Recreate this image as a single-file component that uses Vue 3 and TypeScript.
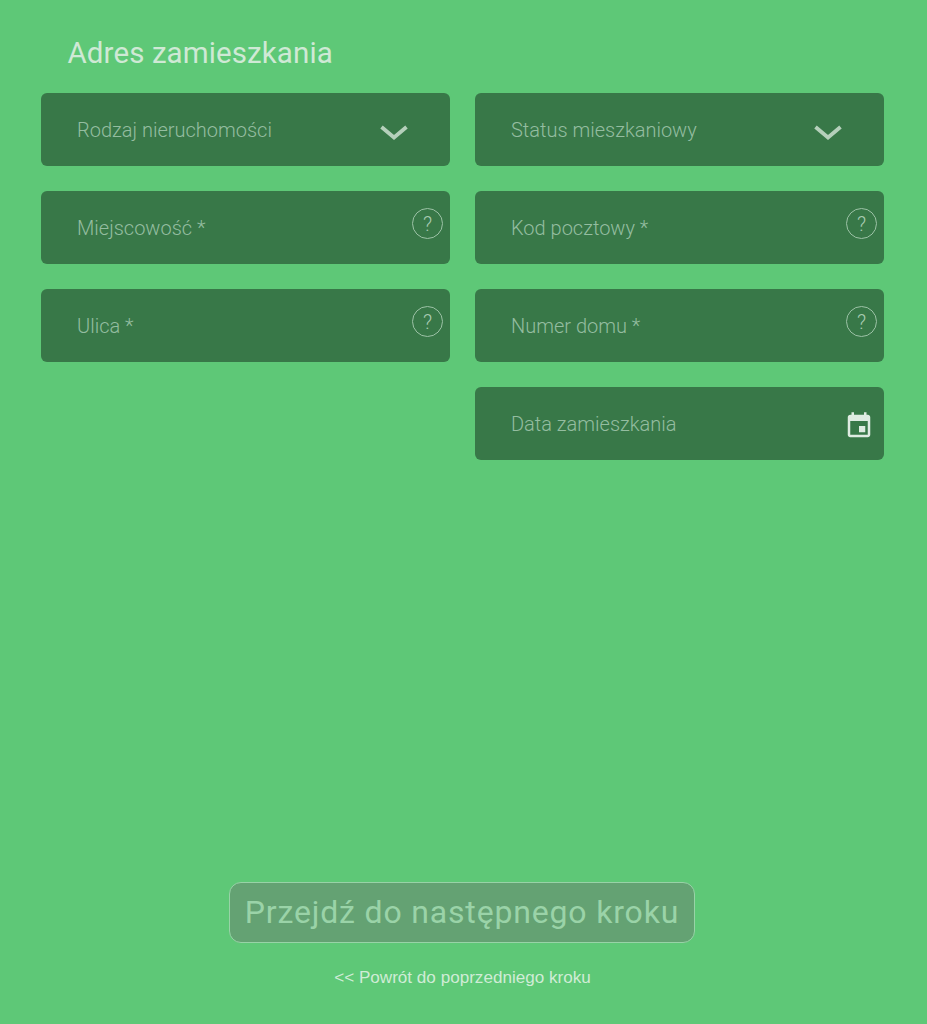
<script setup lang="ts">
interface Field { label: string; kind: 'select' | 'help' | 'date' | 'empty' }
const fields: Field[] = [
  { label: 'Rodzaj nieruchomości', kind: 'select' },
  { label: 'Status mieszkaniowy', kind: 'select' },
  { label: 'Miejscowość *', kind: 'help' },
  { label: 'Kod pocztowy *', kind: 'help' },
  { label: 'Ulica *', kind: 'help' },
  { label: 'Numer domu *', kind: 'help' },
  { label: '', kind: 'empty' },
  { label: 'Data zamieszkania', kind: 'date' },
]
</script>

<template>
  <main class="page">
    <h1 class="title">Adres zamieszkania</h1>
    <form class="grid" @submit.prevent>
      <template v-for="(f, i) in fields" :key="i">
        <div v-if="f.kind === 'empty'" />
        <div v-else class="field">
          <span class="label">{{ f.label }}</span>
          <svg v-if="f.kind === 'select'" class="chev" viewBox="0 0 28 16" width="28" height="16">
            <path d="M1.5 3 L14 13.5 L26.5 3" fill="none" stroke="#b5d0bb" stroke-width="3.8" />
          </svg>
          <span v-if="f.kind === 'help'" class="help">?</span>
          <svg v-if="f.kind === 'date'" class="cal" viewBox="0 0 24 24" width="30" height="30">
            <path fill="#dfece2" d="M17 12h-5v5h5v-5zM16 1v2H8V1H6v2H5c-1.11 0-1.99.9-1.99 2L3 19c0 1.1.89 2 2 2h14c1.1 0 2-.9 2-2V5c0-1.1-.9-2-2-2h-1V1h-2zm3 18H5V8h14v11z" />
          </svg>
        </div>
      </template>
    </form>
    <div class="actions">
      <button class="next" type="button" disabled>Przejdź do następnego kroku</button>
      <a class="back" href="#">&lt;&lt; Powrót do poprzedniego kroku</a>
    </div>
  </main>
</template>

<style>
html, body { margin: 0; background: #5ec877; }
</style>

<style scoped>
.page {
  box-sizing: border-box;
  height: 1024px;
  padding: 0 42.5px 0 40.5px;
  display: flex;
  flex-direction: column;
  background: #5ec877;
  font-family: Roboto, "Noto Sans", sans-serif;
}
.title {
  margin: 0;
  padding: 36px 0 0 27px;
  height: 93px;
  box-sizing: border-box;
  font-size: 29.5px;
  line-height: 34px;
  font-weight: 400;
  color: #cfe9d5;
  letter-spacing: 0.1px;
  flex: none;
}
.grid {
  display: grid;
  grid-template-columns: 409.5px 409.5px;
  grid-auto-rows: 73px;
  column-gap: 24.5px;
  row-gap: 25px;
}
.field {
  position: relative;
  display: flex;
  align-items: center;
  padding-left: 36.5px;
  background: #387848;
  border-radius: 6px;
}
.label {
  font-size: 20px;
  font-weight: 300;
  color: #94bda0;
}
.chev { position: absolute; right: 42px; top: 31px; }
.help {
  position: absolute;
  top: 17px;
  right: 7px;
  box-sizing: border-box;
  width: 31px;
  height: 31px;
  border: 1px solid #9cc2a6;
  border-radius: 50%;
  display: flex;
  align-items: center;
  justify-content: center;
  font-size: 20px;
  font-weight: 300;
  color: #a9cbb2;
}
.cal { position: absolute; right: 10px; top: 24px; }
.actions {
  margin-top: auto;
  padding-bottom: 36px;
  display: flex;
  flex-direction: column;
  align-items: center;
  margin-left: -40.5px;
  margin-right: -42.5px;
}
.next {
  box-sizing: border-box;
  width: 466px;
  height: 61px;
  margin-left: -3px;
  background: #64a273;
  border: 1.5px solid #98d3a7;
  border-radius: 12px;
  padding: 0 0 2px;
  font-family: Roboto, sans-serif;
  font-size: 32px;
  font-weight: 400;
  letter-spacing: 0.83px;
  color: #9ad3a8;
}
.back {
  margin-top: 25px;
  margin-left: -2px;
  font-family: "Liberation Sans", Arial, sans-serif;
  font-size: 17.1px;
  line-height: 20px;
  color: #d0ecd6;
  text-decoration: none;
}
</style>
